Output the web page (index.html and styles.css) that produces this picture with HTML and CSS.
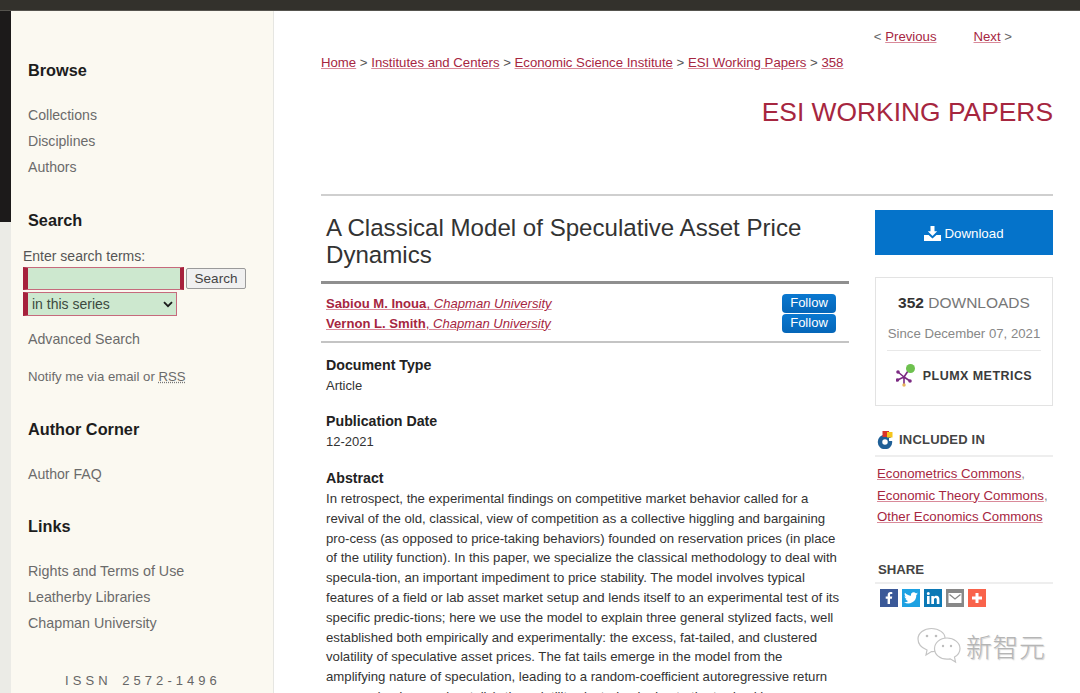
FILE: index.html
```html
<!DOCTYPE html>
<html lang="en">
<head>
<meta charset="utf-8">
<title>A Classical Model of Speculative Asset Price Dynamics</title>
<link rel="stylesheet" href="styles.css">
</head>
<body>
<div class="topbar"></div>
<div class="page">
  <div class="strip"><div class="strip-dark"></div></div>
  <aside class="sidebar">
    <h2 class="side-h first">Browse</h2>
    <ul class="side-list">
      <li>Collections</li>
      <li>Disciplines</li>
      <li>Authors</li>
    </ul>
    <h2 class="side-h search-h">Search</h2>
    <form class="search">
      <label class="search-label">Enter search terms:</label>
      <div class="search-row">
        <div class="search-input"></div>
        <div class="search-btn">Search</div>
      </div>
      <div class="search-select">
        <span>in this series</span>
        <svg class="chev" width="10" height="7" viewBox="0 0 10 7"><path d="M1 1.2 5 5.2 9 1.2" fill="none" stroke="#1a1a1a" stroke-width="1.8"/></svg>
      </div>
    </form>
    <div class="side-link adv">Advanced Search</div>
    <div class="side-link notify">Notify me via email or <abbr class="rss">RSS</abbr></div>
    <h2 class="side-h corner-h">Author Corner</h2>
    <ul class="side-list faq"><li>Author FAQ</li></ul>
    <h2 class="side-h links-h">Links</h2>
    <ul class="side-list links">
      <li>Rights and Terms of Use</li>
      <li>Leatherby Libraries</li>
      <li>Chapman University</li>
    </ul>
    <div class="issn">ISSN 2572-1496</div>
  </aside>
  <main class="main">
    <nav class="pager">&lt; <a href="#">Previous</a><span class="pager-gap"></span><a href="#">Next</a> &gt;</nav>
    <nav class="crumbs"><a href="#">Home</a> &gt; <a href="#">Institutes and Centers</a> &gt; <a href="#">Economic Science Institute</a> &gt; <a href="#">ESI Working Papers</a> &gt; <a href="#">358</a></nav>
    <div class="series">ESI WORKING PAPERS</div>
    <div class="columns">
      <article class="article">
        <h1 class="title">A Classical Model of Speculative Asset Price Dynamics</h1>
        <div class="authors">
          <div class="author"><a href="#"><b>Sabiou M. Inoua</b>, <i>Chapman University</i></a><span class="follow">Follow</span></div>
          <div class="author"><a href="#"><b>Vernon L. Smith</b>, <i>Chapman University</i></a><span class="follow">Follow</span></div>
        </div>
        <h3 class="field-h doc">Document Type</h3>
        <p class="field">Article</p>
        <h3 class="field-h date">Publication Date</h3>
        <p class="field">12-2021</p>
        <h3 class="field-h abs">Abstract</h3>
        <p class="abstract">In retrospect, the experimental findings on competitive market behavior called for a<br>revival of the old, classical, view of competition as a collective higgling and bargaining<br>pro-cess (as opposed to price-taking behaviors) founded on reservation prices (in place<br>of the utility function). In this paper, we specialize the classical methodology to deal with<br>specula-tion, an important impediment to price stability. The model involves typical<br>features of a field or lab asset market setup and lends itself to an experimental test of its<br>specific predic-tions; here we use the model to explain three general stylized facts, well<br>established both empirically and experimentally: the excess, fat-tailed, and clustered<br>volatility of speculative asset prices. The fat tails emerge in the model from the<br>amplifying nature of speculation, leading to a random-coefficient autoregressive return<br>process (and power-law tails); the volatility clustering is due to the traders' b</p>
      </article>
      <aside class="rail">
        <a class="download" href="#">
          <svg width="17" height="15" viewBox="0 0 17 15"><path d="M6.500 0h4v5.200h2.700L8.500 10 3.800 5.200h2.700z" fill="#fff"/><path d="M0 9h4.600l3.900 3.600L12.400 9H17v6H0z" fill="#fff"/></svg>
          <span>Download</span>
        </a>
        <div class="stats">
          <div class="count"><b>352</b> DOWNLOADS</div>
          <div class="since">Since December 07, 2021</div>
          <div class="plumx">
            <svg width="21" height="25" viewBox="0 0 21 25">
              <g stroke="#7b2a82" stroke-width="1.600" fill="#7b2a82">
                <path d="M8 14 2 9M8 14 1.500 17M8 14 8 21M8 14 14 18M8 14 12 8" fill="none"/>
                <circle cx="2" cy="9" r="1"/><circle cx="1.500" cy="17" r="1"/><circle cx="14" cy="18" r="1"/>
              </g>
              <circle cx="14.500" cy="5.500" r="4.500" fill="#6ec14f"/>
              <circle cx="8" cy="22" r="1.700" fill="#e8b55a"/>
            </svg>
            <span>PLUMX METRICS</span>
          </div>
        </div>
        <h4 class="included">
          <svg width="18" height="18" viewBox="0 0 18 18">
            <circle cx="8" cy="11" r="5" fill="none" stroke="#1f5f97" stroke-width="4.500"/>
            <rect x="5.500" y="0" width="6.500" height="6" fill="#d8342a"/>
            <rect x="10" y="1" width="5.500" height="5.500" fill="#f6c51c"/>
            <rect x="12" y="7" width="6" height="3" fill="#fff"/>
          </svg>
          INCLUDED IN
        </h4>
        <div class="commons">
          <div><a href="#">Econometrics Commons</a>,</div>
          <div><a href="#">Economic Theory Commons</a>,</div>
          <div><a href="#">Other Economics Commons</a></div>
        </div>
        <h4 class="share-h">SHARE</h4>
        <div class="share">
          <span class="sq fb"><svg width="18" height="18" viewBox="0 0 18 18"><path d="M10 15V9.700h1.900l.3-2.200H10V6.200c0-.7.2-1.100 1.100-1.100h1.200V3.200c-.3 0-1-.1-1.800-.1-1.700 0-2.800 1-2.800 2.900v1.500H5.700v2.200h1.900V15z" fill="#fff"/></svg></span>
          <span class="sq tw"><svg width="18" height="18" viewBox="0 0 18 18"><path d="M16 4.500c-.5.200-1 .4-1.600.5.600-.4 1-.9 1.200-1.500-.5.300-1.100.6-1.800.7a2.800 2.800 0 0 0-4.800 2.600C6.600 6.600 4.500 5.500 3 3.800c-.8 1.300-.4 3 .9 3.800-.5 0-.9-.1-1.300-.3 0 1.300 1 2.500 2.300 2.800-.4.100-.8.100-1.300 0 .4 1.100 1.400 1.900 2.600 1.900A5.700 5.700 0 0 1 2 13.200 8 8 0 0 0 14.300 6c.7-.4 1.200-.9 1.700-1.500z" fill="#fff"/></svg></span>
          <span class="sq li"><svg width="18" height="18" viewBox="0 0 18 18"><path d="M3 7h2.600v8H3zM4.300 3a1.500 1.500 0 1 1 0 3 1.500 1.500 0 0 1 0-3zM7.300 7h2.500v1.100c.4-.7 1.300-1.300 2.500-1.300 2.600 0 3.100 1.700 3.100 3.900V15h-2.600v-3.800c0-.9 0-2.100-1.300-2.100s-1.500 1-1.500 2V15H7.300z" fill="#fff"/></svg></span>
          <span class="sq em"><svg width="18" height="18" viewBox="0 0 18 18"><path d="M2.500 4h13v10h-13z" fill="#fff"/><path d="M3.500 5.500 9 10l5.500-4.500" fill="none" stroke="#888" stroke-width="1.300"/></svg></span>
          <span class="sq pl"><svg width="18" height="18" viewBox="0 0 18 18"><path d="M7.500 4h3v3.500H14v3h-3.500V14h-3v-3.500H4v-3h3.500z" fill="#fff"/></svg></span>
        </div>
      </aside>
    </div>
  </main>
</div>
<div class="watermark">
  <svg width="46" height="38" viewBox="0 0 46 38">
    <path d="M20 24c-1.500.4-3 .6-4.500.5L10 28l1-5C6 21 2 16.800 2 12 2 6 8 1.500 15.500 1.500S29 6 29 11" fill="#fff" fill-opacity=".75" stroke="#c4c4c4" stroke-width="1.200"/>
    <circle cx="11" cy="9" r="1.300" fill="#bdbdbd"/><circle cx="20" cy="9" r="1.300" fill="#bdbdbd"/>
    <path d="M31 11c7 0 13 4.800 13 10.500 0 3.700-2.200 6.700-5.500 8.500l1 5-5.300-3.200c-1 .2-2.200.4-3.200.4-7 0-12.500-4.600-12.500-10.500S24 11 31 11z" fill="#fff" fill-opacity=".8" stroke="#c4c4c4" stroke-width="1.200"/>
    <circle cx="27" cy="19" r="1.200" fill="#bdbdbd"/><circle cx="35" cy="19" r="1.200" fill="#bdbdbd"/>
  </svg>
  <span>新智元</span>
</div>
</body>
</html>
```

FILE: styles.css
```css
* { box-sizing: border-box; }
html, body { margin: 0; height: 693px; overflow: hidden; background: #fff; }
body { font-family: "Liberation Sans", Arial, sans-serif; color: #333; position: relative; }
a { color: #a6263f; text-decoration: underline; text-decoration-color: #d98a9a; }
h1, h2, h3, h4, p, ul { margin: 0; padding: 0; }
ul { list-style: none; }

.topbar { height: 11px; background: #33312c; border-bottom: 1px solid #55534e; }
.page { display: flex; height: 682px; }
.strip { width: 11px; flex: none; background: #ebebe6; }
.strip-dark { height: 211px; background: #1c1a1a; }

.sidebar { width: 263px; flex: none; background: #fbf9f1; border-right: 1px solid #e6e6e2; padding-top: 50px; color: #666; }
.side-h { font-size: 16.300px; line-height: 19px; font-weight: bold; color: #1d1d1d; margin-left: 17px; }
.side-list { margin-left: 17px; font-size: 14.100px; color: #6b6b6b; }
.side-list li { line-height: 26px; }
.side-h.first + .side-list { margin-top: 22px; }
.search-h { margin-top: 31px; }
.search { margin: 18px 0 0 12px; }
.search-label { display: block; font-size: 14px; line-height: 16px; color: #555; }
.search-row { display: flex; align-items: center; margin-top: 3px; }
.search-input { width: 161px; height: 23px; background: #cde8cf; border: 1px solid #c66a7c; border-left: 5px solid #a6213c; border-right: 4px solid #a6213c; }
.search-btn { width: 60px; height: 21px; margin-left: 2px; background: #f0f0f0; border: 1px solid #9a9a9a; border-radius: 2px; font-size: 13.500px; line-height: 19px; text-align: center; color: #444; }
.search-select { display: flex; align-items: center; justify-content: space-between; width: 154px; height: 24px; margin-top: 2px; padding: 0 3px 0 4px; background: #cde8cf; border: 1px solid #c66a7c; border-left: 5px solid #a6213c; font-size: 14px; color: #3c4a40; }
.side-link { margin-left: 17px; color: #6b6b6b; }
.adv { margin-top: 14px; font-size: 14.200px; line-height: 18px; }
.notify { margin-top: 20px; font-size: 13.200px; line-height: 18px; }
.rss { text-decoration: underline dotted #777; }
.corner-h { margin-top: 34px; }
.faq { margin-top: 22px; }
.links-h { margin-top: 30px; }
.links { margin-top: 22px; font-size: 14.300px; }
.issn { margin-top: 37px; text-align: center; font-size: 13px; line-height: 16px; letter-spacing: 4.050px; color: #666; padding-left: 2px; word-spacing: 3px; }

.main { flex: 1; min-width: 0; padding: 0 27px 0 47px; }
.pager { margin-top: 17px; padding-right: 41px; text-align: right; font-size: 13.200px; line-height: 17px; color: #666; }
.pager-gap { display: inline-block; width: 37px; }
.crumbs { margin-top: 9px; font-size: 13.200px; line-height: 18px; color: #555; white-space: nowrap; }
.series { margin-top: 24px; text-align: right; font-size: 26.400px; line-height: 32px; color: #a6263f; }
.columns { display: flex; justify-content: space-between; margin-top: 66px; border-top: 2px solid #cfcfcf; padding-top: 14px; }
.article { width: 528px; }
.title { padding: 4px 0 0 5px; font-size: 24.100px; font-weight: normal; line-height: 27px; color: #333; height: 71px; }
.authors { margin-top: 0; border-top: 3px solid #8f8f8f; border-bottom: 2px solid #c4c4c4; padding: 10px 13px 8px 5px; }
.author { display: flex; justify-content: space-between; align-items: center; height: 19.500px; font-size: 13.100px; }
.author b { font-weight: bold; }
.follow { width: 54px; height: 19px; background: linear-gradient(#0a78d0, #0566b8); border-radius: 4px; color: #fff; font-size: 13px; line-height: 18px; text-align: center; }
.field-h { margin-left: 5px; font-size: 14.200px; line-height: 18px; font-weight: bold; color: #222; }
.doc { margin-top: 13px; }
.date { margin-top: 17px; }
.abs { margin-top: 18px; }
.field { margin: 3px 0 0 5px; font-size: 13px; line-height: 18px; color: #333; }
.abstract { margin: 2px 0 0 5px; font-size: 13.200px; line-height: 19.800px; color: #333; white-space: nowrap; }

.rail { width: 178px; flex: none; }
.download { display: flex; align-items: center; justify-content: center; gap: 3px; height: 45px; padding-top: 1px; background: #0573ca; color: #fff; font-size: 13.300px; text-decoration: none; }
.stats { margin-top: 22px; height: 129px; border: 1px solid #e3e3e3; text-align: center; padding: 16px 11px 0; }
.count { font-size: 15.500px; line-height: 18px; color: #777; }
.count b { color: #333; }
.since { margin-top: 14px; font-size: 13.200px; line-height: 16px; color: #888; padding-bottom: 8px; border-bottom: 1px solid #e8e8e8; white-space: nowrap; }
.plumx { display: flex; align-items: center; justify-content: center; gap: 6px; margin-top: 12px; font-size: 12.500px; font-weight: bold; letter-spacing: .45px; color: #3b3b3b; }
.included { display: flex; align-items: center; gap: 4px; margin-top: 24px; height: 27px; padding: 0 0 6px 2px; border-bottom: 2px solid #eee; font-size: 13px; color: #444; letter-spacing: .2px; }
.commons { margin-top: 6px; padding-left: 2px; font-size: 13.250px; line-height: 21.500px; color: #888; white-space: nowrap; }
.share-h { margin-top: 34px; height: 22px; padding: 0 0 4px 3px; border-bottom: 2px solid #eee; font-size: 13.200px; line-height: 16px; color: #444; }
.share { display: flex; gap: 4px; margin-top: 5px; padding-left: 5px; }
.sq { width: 18px; height: 18px; display: block; }
.sq svg { display: block; }
.fb { background: #3b5998; }
.tw { background: #1da1e2; }
.li { background: #0b78b5; }
.em { background: #888; }
.pl { background: #f9634b; }

.watermark { position: absolute; left: 916px; top: 626px; display: flex; align-items: center; gap: 4px; color: #b5b5b5; }
.watermark span { font-family: "Noto Sans CJK SC", sans-serif; font-weight: 300; font-size: 26px; line-height: 40px; letter-spacing: .5px; text-shadow: 1px 1px 1px rgba(120,120,120,.35); }
```
